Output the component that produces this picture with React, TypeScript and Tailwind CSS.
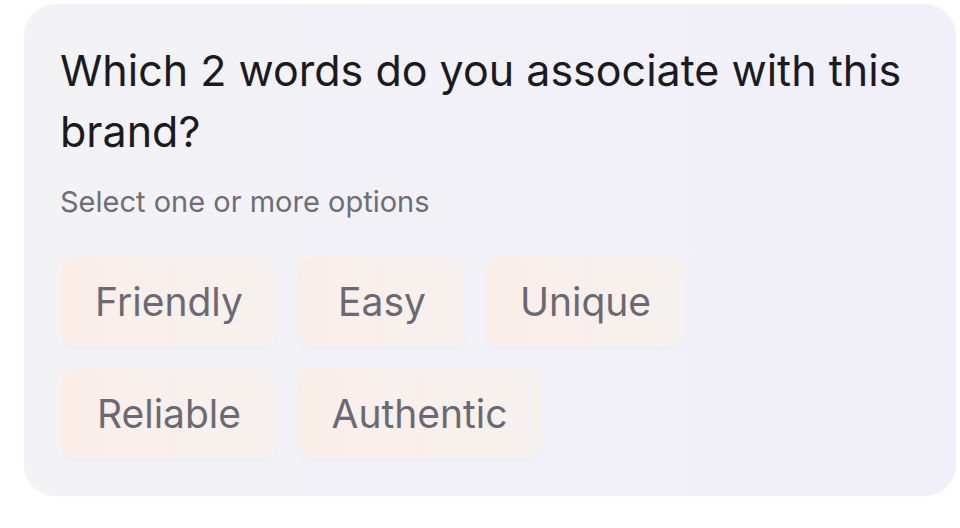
const options = [
  { label: 'Friendly', w: 'w-[218px]' },
  { label: 'Easy', w: 'w-[168px]' },
  { label: 'Unique', w: 'w-[199px]' },
  { label: 'Reliable', w: 'w-[218px]' },
  { label: 'Authentic', w: 'w-[243px]' },
]

export default function App() {
  return (
    <div className="min-h-[528px] w-[960px] bg-white pl-6 pt-1 font-['Inter','Noto_Sans',sans-serif]">
      <div className="h-[492px] w-[932px] rounded-[32px] bg-gradient-to-r from-[#f3f2f5] to-[#f1f0fa] px-9 pt-9 shadow-[0_0_2px_rgba(0,0,0,0.06)]">
        <h1 className="text-[43px] font-normal leading-[61px] text-[#1b1a1f]">
          Which 2 words do you associate with this brand?
        </h1>
        <p className="mt-[22px] text-[29px] leading-[36px] text-[#6f6e76]">Select one or more options</p>
        <div className="mt-[37px] flex flex-wrap gap-x-5 gap-y-[22px]">
          {options.map((o) => (
            <button
              key={o.label}
              className={`flex h-[90px] ${o.w} items-center justify-center rounded-2xl bg-gradient-to-r from-[#fbeee9] to-[#f6f1ef] text-[39px] text-[#6b6a74] shadow-[0_4px_6px_-4px_rgba(0,0,0,0.06)]`}
            >
              {o.label}
            </button>
          ))}
        </div>
      </div>
    </div>
  )
}
